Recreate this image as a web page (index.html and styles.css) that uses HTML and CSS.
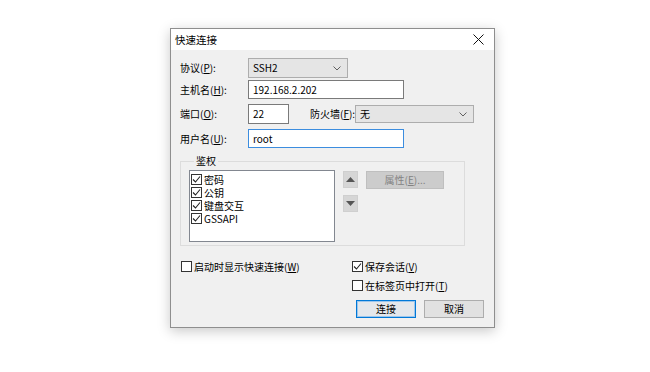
FILE: index.html
```html
<!DOCTYPE html>
<html lang="zh-CN">
<head>
<meta charset="utf-8">
<title>快速连接</title>
<link rel="stylesheet" href="styles.css">
</head>
<body>
<div class="stage">
  <div class="dialog">
    <div class="titlebar">
      <span class="title">快速连接</span>
      <svg class="close" width="11" height="11" viewBox="0 0 11 11"><path d="M0.5 0.5 L10.5 10.5 M10.5 0.5 L0.5 10.5" stroke="#111" stroke-width="1" fill="none"/></svg>
    </div>
    <div class="body">
      <div class="row r1">
        <label class="lbl">协议(<u>P</u>):</label>
        <div class="combo w-proto"><span>SSH2</span><svg class="chev" width="8" height="5" viewBox="0 0 8 5"><path d="M0.5 0.5 L4 4 L7.5 0.5" stroke="#606060" stroke-width="1" fill="none"/></svg></div>
      </div>
      <div class="row r2">
        <label class="lbl">主机名(<u>H</u>):</label>
        <div class="edit w-host">192.168.2.202</div>
      </div>
      <div class="row r3">
        <label class="lbl">端口(<u>O</u>):</label>
        <div class="edit w-port">22</div>
        <label class="lbl-fw">防火墙(<u>F</u>):</label>
        <div class="combo w-fw"><span>无</span><svg class="chev" width="8" height="5" viewBox="0 0 8 5"><path d="M0.5 0.5 L4 4 L7.5 0.5" stroke="#606060" stroke-width="1" fill="none"/></svg></div>
      </div>
      <div class="row r4">
        <label class="lbl">用户名(<u>U</u>):</label>
        <div class="edit focus w-host">root</div>
      </div>
      <fieldset class="group">
        <legend>鉴权</legend>
        <div class="group-inner">
          <div class="listbox">
            <div class="item"><span class="cb checked"><svg width="9" height="9" viewBox="0 0 9 9"><path d="M1 4.5 L3.5 7 L8 1.5" stroke="#222" stroke-width="1.1" fill="none"/></svg></span>密码</div>
            <div class="item"><span class="cb checked"><svg width="9" height="9" viewBox="0 0 9 9"><path d="M1 4.5 L3.5 7 L8 1.5" stroke="#222" stroke-width="1.1" fill="none"/></svg></span>公钥</div>
            <div class="item"><span class="cb checked"><svg width="9" height="9" viewBox="0 0 9 9"><path d="M1 4.5 L3.5 7 L8 1.5" stroke="#222" stroke-width="1.1" fill="none"/></svg></span>键盘交互</div>
            <div class="item"><span class="cb checked"><svg width="9" height="9" viewBox="0 0 9 9"><path d="M1 4.5 L3.5 7 L8 1.5" stroke="#222" stroke-width="1.1" fill="none"/></svg></span>GSSAPI</div>
          </div>
          <div class="arrows">
            <div class="arrow"><svg width="9" height="5" viewBox="0 0 9 5"><path d="M0 5 L4.5 0 L9 5 Z" fill="#555"/></svg></div>
            <div class="arrow"><svg width="9" height="5" viewBox="0 0 9 5"><path d="M0 0 L4.5 5 L9 0 Z" fill="#555"/></svg></div>
          </div>
          <div class="btn disabled w-prop">属性(<u>E</u>)...</div>
        </div>
      </fieldset>
      <div class="options">
        <div class="opt col-left"><span class="cb"></span>启动时显示快速连接(<u>W</u>)</div>
        <div class="col-right">
          <div class="opt"><span class="cb checked"><svg width="9" height="9" viewBox="0 0 9 9"><path d="M1 4.5 L3.5 7 L8 1.5" stroke="#222" stroke-width="1.1" fill="none"/></svg></span>保存会话(<u>V</u>)</div>
          <div class="opt"><span class="cb"></span>在标签页中打开(<u>T</u>)</div>
        </div>
      </div>
      <div class="buttons">
        <div class="btn default">连接</div>
        <div class="btn">取消</div>
      </div>
    </div>
  </div>
</div>
</body>
</html>
```

FILE: styles.css
```css
* { box-sizing: border-box; }
html, body { margin: 0; padding: 0; background: #ffffff; }
body {
  font-family: "Noto Sans CJK SC", "Microsoft YaHei", sans-serif;
  font-size: 10px;
  color: #000;
  width: 650px;
  height: 372px;
  overflow: hidden;
}
u { text-decoration: underline; text-underline-offset: 1px; }
.stage { padding: 28px 0 0 170px; }
.dialog {
  width: 325px;
  height: 300px;
  border: 1px solid #8e8e8e;
  background: #f0f0f0;
  box-shadow: 0 3px 12px rgba(0,0,0,0.22);
  display: flex;
  flex-direction: column;
}
.titlebar {
  height: 21px;
  background: #fff;
  display: flex;
  align-items: center;
  padding: 0 8px 0 4px;
  flex: none;
}
.title { flex: 1; line-height: 14px; font-size: 10.5px; }
.close { display: block; margin-right: 2px; }
.body { padding: 8px 10px 9px 9px; flex: 1; }
.row { display: flex; align-items: center; }
.r1 { height: 20px; }
.r2 { height: 19px; margin-top: 2px; }
.r3 { height: 20px; margin-top: 5px; }
.r4 { height: 19px; margin-top: 5px; }
.lbl { width: 68px; flex: none; line-height: 14px; }
.lbl-fw { margin-left: 21px; line-height: 14px; }
.edit {
  height: 19px;
  background: #fff;
  border: 1px solid #7a7a7a;
  padding: 0 4px;
  line-height: 17px;
}
.edit.focus { border-color: #3c8ddf; }
.w-host { width: 156px; }
.w-port { width: 41px; height: 20px; line-height: 18px; padding-left: 4px; }
.combo {
  height: 20px;
  background: #e5e5e5;
  border: 1px solid #adadad;
  display: flex;
  align-items: center;
  justify-content: space-between;
  padding: 0 6px 0 4px;
  line-height: 14px;
}
.w-proto { width: 100px; }
.w-fw { width: 119px; height: 18px; margin-left: auto; margin-right: 10px; }
.chev { display: block; }
.group {
  margin: 6px 0 0 0;
  width: 285px;
  border: 1px solid #dcdcdc;
  padding: 2px 8px 3px 8px;
  min-inline-size: 0;
}
.group legend {
  padding: 0 2px;
  margin-left: 5px;
  line-height: 14px;
  height: 14px;
}
.group-inner { display: flex; align-items: flex-start; }
.listbox {
  width: 146px;
  height: 72px;
  background: #fff;
  border: 1px solid #828790;
  padding: 2px 1px;
}
.item {
  height: 13px;
  display: flex;
  align-items: center;
  line-height: 12px;
}
.cb {
  width: 11px;
  height: 11px;
  border: 1px solid #333;
  background: #fff;
  display: inline-flex;
  align-items: center;
  justify-content: center;
  flex: none;
  margin-right: 2px;
}
.cb svg { display: block; }
.arrows { display: flex; flex-direction: column; gap: 7px; margin-left: 8px; margin-top: 1px; }
.arrow {
  width: 15px;
  height: 17px;
  background: #d6d6d6;
  border: 1px solid #cfcfcf;
  display: flex;
  align-items: center;
  justify-content: center;
}
.arrow svg { display: block; }
.btn {
  height: 18px;
  background: #e1e1e1;
  border: 1px solid #adadad;
  display: flex;
  align-items: center;
  justify-content: center;
  line-height: 14px;
}
.btn.disabled {
  background: #cccccc;
  border-color: #bfbfbf;
  color: #838383;
}
.w-prop { width: 78px; margin-left: 8px; margin-top: 1px; }
.options {
  margin-top: 11px;
  display: grid;
  grid-template-columns: 171px 1fr;
}
.opt { height: 19px; display: flex; align-items: center; line-height: 14px; }
.col-left { padding-left: 1px; }
.col-right { padding-left: 1px; }
.opt .cb { margin-right: 2px; }
.buttons {
  margin-top: 5px;
  display: flex;
  justify-content: flex-end;
  gap: 8px;
}
.buttons .btn { width: 60px; }
.btn.default {
  border-color: #0078d7;
  box-shadow: inset 0 0 0 1px #9cc6ec;
  background: #e3e7eb;
}
```
